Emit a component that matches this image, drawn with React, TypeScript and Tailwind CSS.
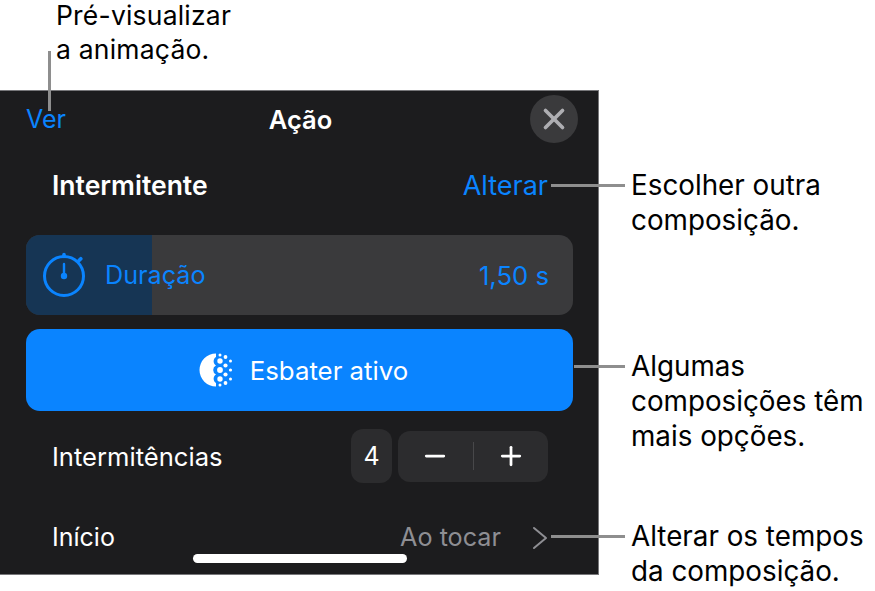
import React from 'react';
import { Minus, Plus, X } from 'lucide-react';

const font = { fontFamily: 'Inter, sans-serif' };

const StopwatchIcon = () => (
  <svg width="46" height="46" viewBox="0 0 46 46" fill="none" className="text-[#0a84ff]">
    <circle cx="22" cy="24" r="19.5" stroke="currentColor" strokeWidth="3" />
    <path d="M22 2.5V4.5M37 8.5l1.8 -1.8" stroke="currentColor" strokeWidth="3.6" strokeLinecap="round" />
    <path d="M22 12v12" stroke="currentColor" strokeWidth="2.4" strokeLinecap="round" />
    <circle cx="22" cy="24" r="3.2" fill="currentColor" />
  </svg>
);

const FadeIcon = () => {
  const dots = [
    [21, 9, 2.7], [21, 18, 2.9], [21, 27, 2.7],
    [21, 3, 1.5], [21, 33, 1.5],
    [26.5, 5, 1.9], [26.5, 13.5, 2.1], [26.5, 22.5, 2.1], [26.5, 31, 1.9],
    [31.5, 9, 1.5], [31.5, 18, 1.6], [31.5, 27, 1.5],
  ];
  return (
    <svg width="36" height="36" viewBox="0 0 36 36" fill="white">
      <path d="M17 1.5A16.5 16.5 0 1 0 17 34.5L17 31A5 5 0 0 1 17 22.5A5 5 0 0 1 17 13.5A5 5 0 0 1 17 5z" />
      {dots.map(([cx, cy, r], i) => (
        <circle key={i} cx={cx} cy={cy} r={r} />
      ))}
    </svg>
  );
};

const App = () => {
  return (
    <div className="relative w-[875px] h-[591px] bg-white overflow-hidden" style={font}>
      <div className="h-[90px] pl-[56px] text-[26.5px] tracking-[0.2px] text-black">
        <div className="h-[31px] leading-[31px]">Pré-visualizar</div>
        <div className="leading-[37px]">a animação.</div>
      </div>

      <div className="w-[599px] h-[485px] bg-[#1c1c1e] border-t border-r border-b border-[#77777a] flex flex-col">
        {/* header */}
        <div className="h-[56px] shrink-0 flex items-center justify-between pl-[26px] pr-[20px]">
          <span className="mt-[2px] text-[25px] text-[#0a84ff]">Ver</span>
          <span className="mt-[2px] text-[25.5px] font-semibold text-white ml-[5px]">Ação</span>
          <div className="w-[48px] h-[48px] rounded-full bg-[#3a3a3c] flex items-center justify-center">
            <X size={34} strokeWidth={2.6} className="text-[#aeaeb2]" />
          </div>
        </div>

        <div className="h-[76px] shrink-0 flex items-center justify-between pl-[52px] pr-[50px]">
          <span className="mt-[2px] text-[26.5px] font-semibold text-white">Intermitente</span>
          <span className="mt-[2px] text-[27px] text-[#0a84ff]">Alterar</span>
        </div>

        {/* duration slider */}
        <div className="ml-[26px] mr-[25px] mt-[12px] h-[80px] shrink-0 rounded-[14px] bg-[#3a3a3c] overflow-hidden relative">
          <div className="absolute left-0 top-0 bottom-0 w-[126px] bg-[#163554]" />
          <div className="relative h-full flex items-center pl-[16px] pr-[24px]">
            <StopwatchIcon />
            <span className="mt-[2px] ml-[17px] text-[25.2px] text-[#0a84ff]">Duração</span>
            <span className="mt-[2px] ml-auto text-[25.7px] text-[#0a84ff]">1,50 s</span>
          </div>
        </div>

        {/* fade button */}
        <div className="ml-[26px] mr-[25px] mt-[14px] pl-[8px] h-[82px] shrink-0 rounded-[14px] bg-[#0a84ff] flex items-center justify-center gap-[15px]">
          <FadeIcon />
          <span className="mt-[2px] text-[25.8px] text-white">Esbater ativo</span>
        </div>

        {/* flashes */}
        <div className="h-[90px] shrink-0 flex items-center pl-[52px] pr-[50px]">
          <span className="mt-[2px] text-[25.6px] text-white">Intermitências</span>
          <div className="ml-auto flex items-center gap-[6px]">
            <div className="w-[41px] h-[54px] rounded-[12px] bg-[#2c2c2e] flex items-center justify-center text-[25px] text-white">
              <span className="mt-[2px]">4</span>
            </div>
            <div className="w-[150px] h-[51px] rounded-[12px] bg-[#2c2c2e] flex items-center">
              <div className="flex-1 flex justify-center"><Minus size={30} strokeWidth={2.2} className="text-white" /></div>
              <div className="w-px h-[28px] bg-[#48484a]" />
              <div className="flex-1 flex justify-center"><Plus size={30} strokeWidth={2.2} className="text-white" /></div>
            </div>
          </div>
        </div>

        {/* start */}
        <div className="h-[72px] shrink-0 flex items-center pl-[52px] pr-[50px]">
          <span className="mt-[2px] text-[25px] text-white">Início</span>
          <span className="mt-[2px] ml-auto text-[25.2px] text-[#8e8e93]">Ao tocar</span>
          <svg width="16" height="24" viewBox="0 0 16 24" fill="none" className="ml-[31px] mt-[2px] text-[#8e8e93]">
            <path d="M2 2l12 10L2 22" stroke="currentColor" strokeWidth="2" strokeLinecap="round" strokeLinejoin="round" />
          </svg>
        </div>
      </div>

      {/* home indicator */}
      <div className="absolute left-[193px] top-[554px] w-[214px] h-[9px] rounded-full bg-white" />

      {/* leader lines */}
      <div className="absolute left-[48px] top-[51px] w-[3px] h-[60px] bg-[#8e8e8e]" />
      <div className="absolute left-[551px] top-[184px] w-[74px] h-[3px] bg-[#8e8e8e]" />
      <div className="absolute left-[574px] top-[365px] w-[51px] h-[3px] bg-[#8e8e8e]" />
      <div className="absolute left-[551px] top-[535px] w-[74px] h-[3px] bg-[#8e8e8e]" />

      {/* callouts */}
      <div className="absolute left-[631px] top-[168px] text-[27.8px] leading-[35px] text-black">
        Escolher outra<br />composição.
      </div>
      <div className="absolute left-[631px] top-[349px] text-[27.8px] leading-[35px] text-black">
        Algumas<br />composições têm<br />mais opções.
      </div>
      <div className="absolute left-[631px] top-[519px] text-[27.8px] leading-[35px] text-black">
        Alterar os tempos<br />da composição.
      </div>
    </div>
  );
};

export default App;
